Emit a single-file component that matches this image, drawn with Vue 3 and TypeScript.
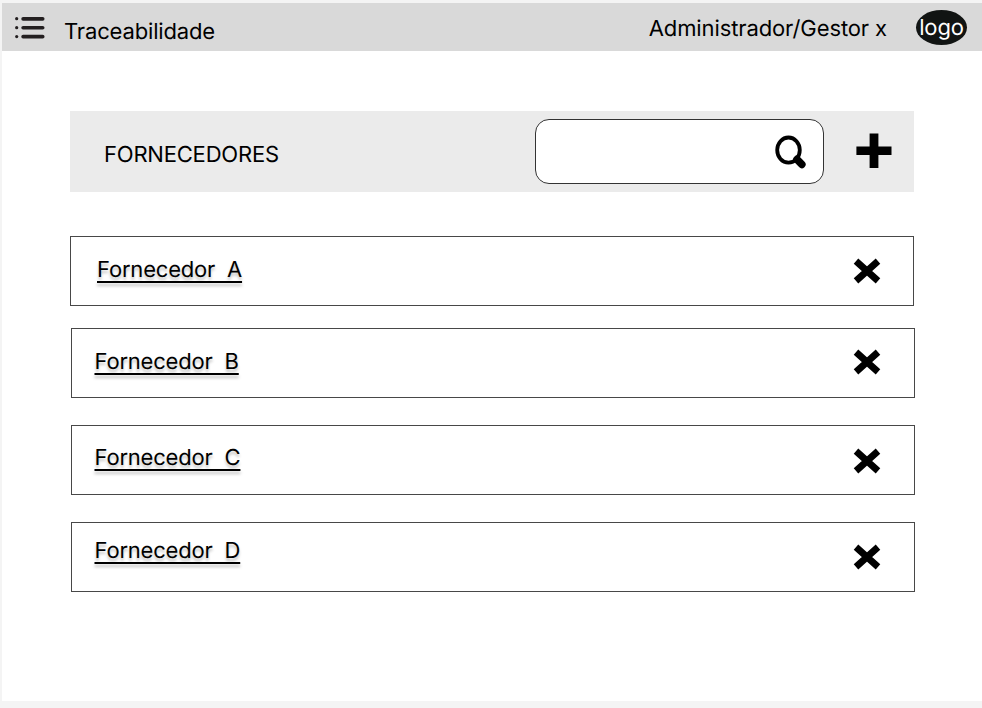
<script setup lang="ts">
interface Supplier {
  id: string
  name: string
}

const suppliers: Supplier[] = [
  { id: 'a', name: 'Fornecedor\u00a0 A' },
  { id: 'b', name: 'Fornecedor\u00a0 B' },
  { id: 'c', name: 'Fornecedor\u00a0 C' },
  { id: 'd', name: 'Fornecedor\u00a0 D' },
]
</script>

<template>
  <div class="page">
    <header class="topbar">
      <svg class="menu" width="30" height="24" viewBox="0 0 30 24">
        <g fill="#231f20">
          <circle cx="1.7" cy="2.7" r="1.6" />
          <circle cx="1.7" cy="11.7" r="1.6" />
          <circle cx="1.7" cy="20.6" r="1.6" />
          <rect x="6.3" y="1" width="23.2" height="3.7" rx="1.8" />
          <rect x="6.3" y="9.9" width="23.2" height="3.7" rx="1.8" />
          <rect x="6.3" y="18.8" width="23.2" height="3.7" rx="1.8" />
        </g>
      </svg>
      <span class="brand">Traceabilidade</span>
      <span class="user">Administrador/Gestor x</span>
      <span class="logo">logo</span>
    </header>
    <main class="content">
      <section class="panel">
        <h1 class="title">FORNECEDORES</h1>
        <div class="search">
          <svg width="32" height="34" viewBox="0 0 32 34">
            <ellipse cx="13.5" cy="15.1" rx="11.3" ry="12.6" fill="none" stroke="#000" stroke-width="3.8" />
            <path d="M22 24.4 L26.8 29.4" stroke="#000" stroke-width="7.6" stroke-linecap="round" />
          </svg>
        </div>
        <svg class="plus" width="36" height="36" viewBox="0 0 36 36">
          <path d="M13.6 0.5h8.8v13.1h13.1v8.3H22.4v13H13.6v-13H0.4v-8.3h13.2z" />
        </svg>
      </section>
      <ul class="list">
        <li v-for="s in suppliers" :key="s.id" class="row" :class="`row-${s.id}`">
          <a class="name">{{ s.name }}</a>
          <svg class="remove" width="28" height="26" viewBox="0 0 28 26">
            <path d="M3 3.1 L25 22.9 M25 3.1 L3 22.9" stroke="#000" stroke-width="6.8" />
          </svg>
        </li>
      </ul>
    </main>
  </div>
</template>

<style>
body {
  background: #f4f4f4;
}
</style>

<style scoped>
.page {
  box-sizing: border-box;
  width: 980px;
  height: 698px;
  margin: 3px 0 0 2px;
  background: #fff;
  color: #000;
  font-family: Inter, sans-serif;
  font-size: 22px;
  font-weight: 400;
  text-rendering: geometricPrecision;
  letter-spacing: -0.15px;
  line-height: 29px;
  white-space: nowrap;
}
.page,
.page * {
  box-sizing: border-box;
}
.topbar {
  display: flex;
  align-items: flex-start;
  height: 48px;
  background: #d9d9d9;
}
.menu {
  margin: 13px 0 0 13px;
}
.brand {
  margin: 15px 0 0 19px;
}
.user {
  margin: 12px 29px 0 auto;
  letter-spacing: -0.11px;
}
.logo {
  display: flex;
  justify-content: center;
  width: 51px;
  height: 35px;
  margin: 6.5px 15px 0 0;
  padding-top: 4px;
  border-radius: 50%;
  background: #111413;
  color: #fff;
}
.content {
  padding: 59.5px 67px 0 68.4px;
}
.panel {
  display: flex;
  align-items: flex-start;
  width: 844px;
  height: 81.5px;
  background: #ebebeb;
}
.title {
  margin: 30px 0 0 33.6px;
  font-size: inherit;
  font-weight: inherit;
  letter-spacing: -0.2px;
}
.search {
  display: flex;
  justify-content: flex-end;
  width: 289px;
  height: 65.5px;
  margin: 8px 31.6px 0 auto;
  padding: 15px 16px 0 0;
  border: 1px solid #333;
  border-radius: 14px;
  background: #fff;
}
.plus {
  margin: 22.5px 22.6px 0 0;
}
.list {
  margin: 44px 0 0;
  padding: 0;
  list-style: none;
}
.row {
  display: flex;
  align-items: flex-start;
  justify-content: space-between;
  width: 844px;
  height: 70px;
  margin-left: 0.6px;
  padding: 19px 33px 0 22.5px;
  border: 1px solid #484848;
}
.row-a {
  margin-left: -0.4px;
  padding: 19px 32px 0 26px;
}
.row-b {
  margin-top: 22px;
}
.row-c {
  margin-top: 27px;
  padding-top: 18px;
}
.row-d {
  margin-top: 27px;
  padding-top: 14px;
}
.name {
  letter-spacing: -0.2px;
  text-decoration: underline;
  text-decoration-thickness: 1.5px;
  text-underline-offset: 3.5px;
  text-shadow: 0 3px 3px rgba(0, 0, 0, 0.25);
}
.remove {
  margin-top: 1px;
}
.row-a .remove {
  margin-top: 2px;
}
.row-c .remove {
  margin-top: 3.5px;
}
.row-d .remove {
  margin-top: 7px;
}
</style>
